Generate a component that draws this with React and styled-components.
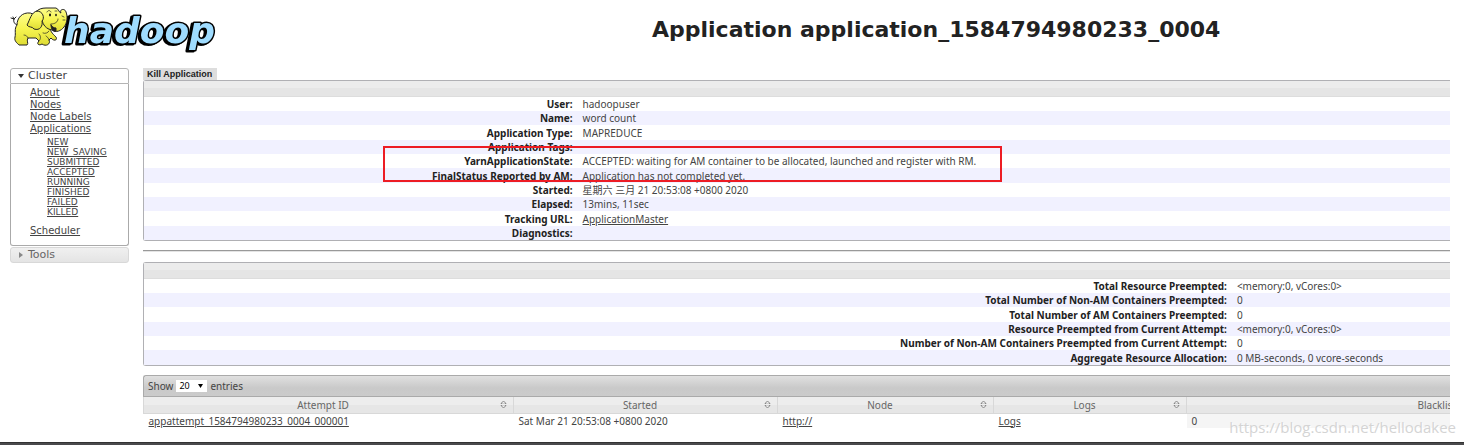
import React, { useState } from 'react';
import styled, { createGlobalStyle } from 'styled-components';

const GlobalStyle = createGlobalStyle`
    * {
        box-sizing: border-box;
    }
    body {
        margin: 0;
        background-color: #fff;
        color: #444;
        font-family: 'Noto Sans', 'Noto Sans CJK SC', sans-serif;
        font-size: 10px;
        line-height: 14px;
        overflow: hidden;
    }
    a {
        color: #444;
    }
`;
const Page = styled.div`
    position: relative;
    display: flex;
    flex-direction: column;
    min-height: 100vh;
`;
const Header = styled.header`
    display: grid;
    grid-template-columns: 27.4% 1fr;
    height: 68px;
    padding: 7px 0 0 10px;
`;
const Logo = styled.svg`
    width: 208px;
    height: 48px;
`;
const Wordmark = styled.text`
    font: italic bold 36px 'DejaVu Sans', sans-serif;
    stroke-linejoin: round;
    filter: drop-shadow(-2px 1px 0 #000);
`;
const Title = styled.h1`
    margin: 8px 0 0;
    color: #222;
    font: bold 22px/30px 'DejaVu Sans', sans-serif;
    text-align: center;
`;
const Body = styled.div`
    display: flex;
    flex: 1;
    gap: 14px;
    padding: 0 14px 0 10px;
`;
const Sidebar = styled.nav`
    width: 119px;
    flex-shrink: 0;
    font-family: 'DejaVu Sans', sans-serif;
`;
const SectionButton = styled.button`
    display: flex;
    align-items: center;
    gap: 4px;
    width: 100%;
    height: 16px;
    margin-top: ${props => props.$open ? '0' : '1px'};
    padding: 0 7px;
    border: 1px solid ${props => props.$open ? '#b4b4b4' : '#d8d8d8'};
    border-radius: ${props => props.$open ? '3px 3px 0 0' : '3px'};
    background: ${props => props.$open ? '#fff' : 'linear-gradient(#f0f0f0, #e4e4e4)'};
    color: ${props => props.$open ? '#444' : '#666'};
    font: 11px/14px 'DejaVu Sans', sans-serif;
`;
const SectionBody = styled.div`
    padding: 3px 0 8px 19px;
    border: 1px solid #aaa;
    border-top: 0;
    border-radius: 0 0 3px 3px;
`;
const LinkList = styled.ul`
    margin: 0;
    padding: 0;
    list-style: none;
    font-size: 10px;
    line-height: 12px;
`;
const StateList = styled(LinkList)`
    padding: 2px 0 8px 17px;
    font-size: 9px;
    line-height: 10px;
`;
const Main = styled.main`
    flex: 1;
    min-width: 0;
    overflow: hidden;
`;
const KillButton = styled.button`
    display: block;
    height: 12px;
    padding: 0 5px 0 4px;
    border: 0;
    background-color: #ddd;
    color: #222;
    font: bold 9px/12px 'Liberation Sans', sans-serif;
`;
const Panel = styled.section`
    position: relative;
    border: 1px solid #b0b0b4;
    border-right: 0;
    border-radius: 3px 0 0 3px;
`;
const PanelHeader = styled.div`
    height: 16px;
    border-bottom: 1px solid #ddd;
    background: linear-gradient(#ececec 50%, #e5e5e5 50%);
`;
const InfoTable = styled.table`
    width: 100%;
    border-collapse: collapse;
    table-layout: fixed;
`;
const InfoRow = styled.tr`
    height: 14px;
    &:nth-child(even) {
        background-color: #f1f1ff;
    }
    &:nth-child(3n) {
        height: 15px;
    }
`;
const InfoLabel = styled.th`
    width: ${props => props.$width};
    padding: 0 5px 0 0;
    color: #222;
    line-height: 14px;
    text-align: right;
`;
const InfoValue = styled.td`
    padding: 0 0 0 5px;
    line-height: 14px;
`;
const Highlight = styled.div`
    position: absolute;
    top: 65px;
    left: 239px;
    width: 619px;
    height: 36px;
    border: 2px solid #ed1c24;
`;
const Divider = styled.hr`
    height: 2px;
    margin: 9px 0 10px;
    border: 0;
    border-top: 1px solid #999;
    border-bottom: 1px solid #e4e4e4;
`;
const Toolbar = styled.div`
    display: flex;
    align-items: center;
    height: 22px;
    margin-top: 9px;
    padding: 0 4px;
    border: 1px solid #aaa;
    border-width: 1px 0 1px 1px;
    border-radius: 3px 0 0 0;
    background: linear-gradient(#e0e0e0, #c9c9c9 60%, #cbcbcb);
`;
const LengthLabel = styled.label`
    display: flex;
    align-items: center;
    gap: 3px;
`;
const SelectBox = styled.span`
    position: relative;
    display: flex;
`;
const Select = styled.select`
    width: 31px;
    height: 12px;
    padding: 0 3px;
    border: 0;
    background-color: #fff;
    color: #000;
    font: 9px/12px 'Noto Sans', sans-serif;
    appearance: none;
`;
const SelectArrow = styled.svg`
    position: absolute;
    top: 4px;
    right: 4px;
    width: 5px;
    height: 4px;
    pointer-events: none;
`;
const AttemptTable = styled.table`
    width: 1600px;
    border-collapse: collapse;
    table-layout: fixed;
`;
const HeadCell = styled.th`
    width: ${props => props.$width};
    height: 16px;
    padding: 0 6px;
    border: 1px solid #d8d8d8;
    border-top: 0;
    background: linear-gradient(#ededed 50%, #e6e6e6 50%);
    color: #666;
    font-weight: normal;
`;
const HeadContent = styled.div`
    display: flex;
    align-items: center;
    gap: 4px;
    height: 15px;
`;
const HeadText = styled.span`
    flex: 1;
    text-align: center;
`;
const Cell = styled.td`
    height: 14px;
    padding: 0 5px;
    background-color: ${props => props.$sorted ? '#f5f5f5' : '#fff'};
`;
const Footer = styled.footer`
    height: 3px;
    border-top: 1px solid #333;
    background-color: #4a4a4c;
`;
const Watermark = styled.div`
    position: absolute;
    right: 8px;
    bottom: 8px;
    color: #d4d4d4;
    font: 15px/20px 'Open Sans', sans-serif;
    text-shadow: 1px 1px 0 #fff;
`;

const states = ['NEW', 'NEW_SAVING', 'SUBMITTED', 'ACCEPTED', 'RUNNING', 'FINISHED', 'FAILED', 'KILLED'];

const application = [
    { label: 'User:', value: 'hadoopuser' },
    { label: 'Name:', value: 'word count' },
    { label: 'Application Type:', value: 'MAPREDUCE' },
    { label: 'Application Tags:', value: '' },
    { label: 'YarnApplicationState:', value: 'ACCEPTED: waiting for AM container to be allocated, launched and register with RM.' },
    { label: 'FinalStatus Reported by AM:', value: 'Application has not completed yet.' },
    { label: 'Started:', value: '星期六 三月 21 20:53:08 +0800 2020' },
    { label: 'Elapsed:', value: '13mins, 11sec' },
    { label: 'Tracking URL:', value: 'ApplicationMaster', link: true },
    { label: 'Diagnostics:', value: '' },
];

const resources = [
    { label: 'Total Resource Preempted:', value: '<memory:0, vCores:0>' },
    { label: 'Total Number of Non-AM Containers Preempted:', value: '0' },
    { label: 'Total Number of AM Containers Preempted:', value: '0' },
    { label: 'Resource Preempted from Current Attempt:', value: '<memory:0, vCores:0>' },
    { label: 'Number of Non-AM Containers Preempted from Current Attempt:', value: '0' },
    { label: 'Aggregate Resource Allocation:', value: '0 MB-seconds, 0 vcore-seconds' },
];

const columns = [
    { name: 'Attempt ID', width: '370px' },
    { name: 'Started', width: '264px' },
    { name: 'Node', width: '216px' },
    { name: 'Logs', width: '193px' },
    { name: 'Blacklisted Nodes', width: 'auto' },
];

const HadoopLogo = () => (
    <Logo viewBox="0 0 208 48" role="img" aria-label="hadoop">
        <defs>
            <linearGradient id="skin" x1="0" y1="0" x2="0" y2="1">
                <stop offset="0" stopColor="#fdfd8e" />
                <stop offset="0.5" stopColor="#f6f450" />
                <stop offset="1" stopColor="#dedc34" />
            </linearGradient>
        </defs>
        <Wordmark x="54" y="36" fill="#9fdcff" stroke="#000" strokeWidth="3" paintOrder="stroke">hadoop</Wordmark>
        <g fill="url(#skin)" stroke="#222" strokeWidth="1" strokeLinecap="round" strokeLinejoin="round">
            <path d="M8 18C5 18 3 15 4 12L1 11M4 12L3 10M4 12L6 10" fill="none" />
            <path d="M20 6C12 5 7 11 7 18C4 22 6 26 5 30C4 34 7 36 9 38L17 38C19 36 16 34 18 31L26 31L29 34C26 37 29 39 32 37C36 40 41 37 39 33L41 31C43 34 48 34 46 30C44 28 40 25 40 20L30 10Z" />
            <path d="M26 5C28 2 32 1 36 1L46 1C49 2 49 6 51 6C49 2 55 1 56 5C58 10 57 16 54 20C51 24 46 26 42 23C36 22 33 18 32 13Z" />
            <path d="M41 18C41 22 43 25 46 24L46 21C44 21 42 20 41 18Z" fill="#222" />
            <path d="M27 4C21 5 20 13 17 18C19 21 22 19 24 22C30 24 33 19 32 14C35 11 33 4 27 4Z" />
            <path d="M37 5C38 3 40 3 41 5M45 4L47 4M48 12C48 15 45 17 41 17M52 9L54 10M53 13L55 13M39 24C38 26 35 27 33 26M18 31C17 29 16 28 14 28M29 34C31 32 31 29 29 27M39 33C39 31 37 30 36 29" fill="none" strokeWidth="0.7" />
            <ellipse cx="40" cy="8" rx="1" ry="1.4" fill="#111" stroke="none" />
            <ellipse cx="46" cy="8" rx="0.8" ry="1.2" fill="#111" stroke="none" />
        </g>
    </Logo>
);

const SortIcon = () => (
    <svg width="7" height="10" viewBox="0 0 7 10" fill="#eee" stroke="#888">
        <path d="M1 3.5L3.5 1L6 3.5Z" />
        <path d="M1 5.5L3.5 8L6 5.5Z" />
        <path d="M2 4.5H5" stroke="#eee" strokeWidth="2.4" />
    </svg>
);

const Arrow = ({ open }) => (
    <svg width="6" height="6" viewBox="0 0 6 6" fill={open ? '#333' : '#888'}>
        <path d={open ? 'M0 1H6L3 5Z' : 'M1 0V6L5 3Z'} />
    </svg>
);

const InfoPanel = ({ rows, labelWidth, children }) => (
    <Panel>
        <PanelHeader />
        <InfoTable>
            <tbody>
                {rows.map(({ label, value, link }) => (
                    <InfoRow key={label}>
                        <InfoLabel scope="row" $width={labelWidth}>{label}</InfoLabel>
                        <InfoValue>{link ? <a href="#master">{value}</a> : value}</InfoValue>
                    </InfoRow>
                ))}
            </tbody>
        </InfoTable>
        {children}
    </Panel>
);

const App = () => {
    const [size, setSize] = useState('20');

    return (
        <Page>
            <GlobalStyle />
            <Header>
                <HadoopLogo />
                <Title>Application application_1584794980233_0004</Title>
            </Header>
            <Body>
                <Sidebar>
                    <SectionButton $open aria-expanded="true"><Arrow open />Cluster</SectionButton>
                    <SectionBody>
                        <LinkList>
                            <li><a href="#about">About</a></li>
                            <li><a href="#nodes">Nodes</a></li>
                            <li><a href="#labels">Node Labels</a></li>
                            <li>
                                <a href="#apps">Applications</a>
                                <StateList>
                                    {states.map(state => (
                                        <li key={state}><a href={`#${state}`}>{state}</a></li>
                                    ))}
                                </StateList>
                            </li>
                            <li><a href="#scheduler">Scheduler</a></li>
                        </LinkList>
                    </SectionBody>
                    <SectionButton aria-expanded="false"><Arrow />Tools</SectionButton>
                </Sidebar>
                <Main>
                    <KillButton>Kill Application</KillButton>
                    <InfoPanel rows={application} labelWidth="33.2%">
                        <Highlight />
                    </InfoPanel>
                    <Divider />
                    <InfoPanel rows={resources} labelWidth="83.3%" />
                    <Toolbar>
                        <LengthLabel>
                            Show
                            <SelectBox>
                                <Select value={size} onChange={e => setSize(e.target.value)}>
                                    <option>20</option>
                                    <option>50</option>
                                    <option>100</option>
                                </Select>
                                <SelectArrow viewBox="0 0 5 4"><path d="M0 0H5L2.5 4Z" /></SelectArrow>
                            </SelectBox>
                            entries
                        </LengthLabel>
                    </Toolbar>
                    <AttemptTable>
                        <thead>
                            <tr>
                                {columns.map(({ name, width }) => (
                                    <HeadCell key={name} $width={width}>
                                        <HeadContent>
                                            <HeadText>{name}</HeadText>
                                            <SortIcon />
                                        </HeadContent>
                                    </HeadCell>
                                ))}
                            </tr>
                        </thead>
                        <tbody>
                            <tr>
                                <Cell><a href="#attempt">appattempt_1584794980233_0004_000001</a></Cell>
                                <Cell>Sat Mar 21 20:53:08 +0800 2020</Cell>
                                <Cell><a href="#node">http://</a></Cell>
                                <Cell><a href="#logs">Logs</a></Cell>
                                <Cell $sorted>0</Cell>
                            </tr>
                        </tbody>
                    </AttemptTable>
                </Main>
            </Body>
            <Footer />
            <Watermark>https://blog.csdn.net/hellodakee</Watermark>
        </Page>
    );
};

export default App;
